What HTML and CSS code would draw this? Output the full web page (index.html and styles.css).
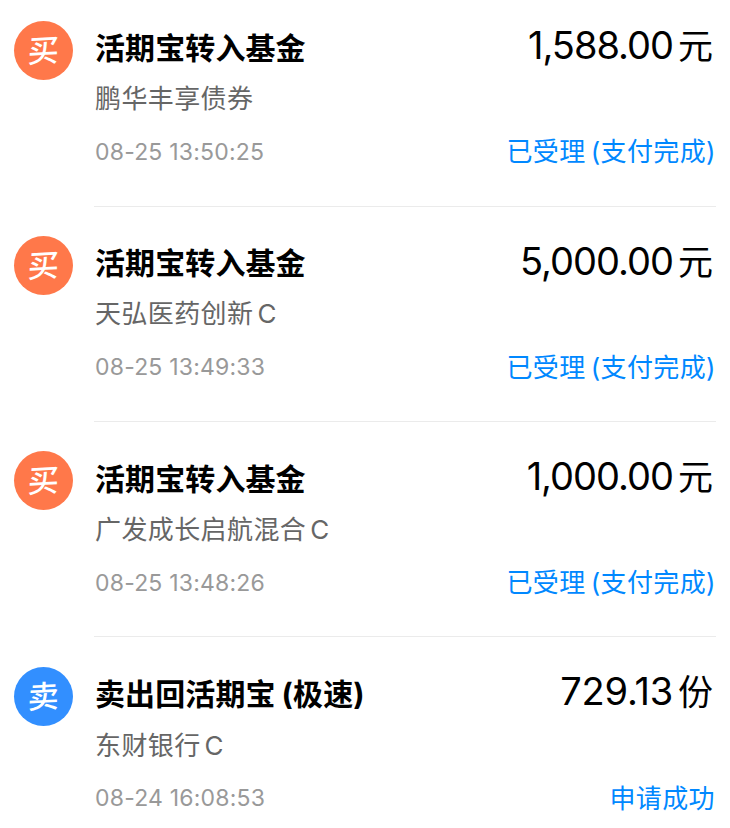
FILE: index.html
```html
<!DOCTYPE html>
<html lang="zh-CN">
<head>
  <meta charset="UTF-8">
  <title>交易记录</title>
  <link rel="stylesheet" href="styles.css">
</head>
<body>
  <div class="record-list">
    <div class="record">
      <div class="badge buy"><span>买</span></div>
      <div class="record-body">
        <div class="record-info">
          <div class="title">活期宝转入基金</div>
          <div class="fund">鹏华丰享债券</div>
          <div class="time">08-25 13:50:25</div>
        </div>
        <div class="record-result">
          <div class="amount">1,588.00<span class="unit">元</span></div>
          <div class="status">已受理<span class="paren">(</span>支付完成)</div>
        </div>
      </div>
    </div>

    <div class="record">
      <div class="badge buy"><span>买</span></div>
      <div class="record-body">
        <div class="record-info">
          <div class="title">活期宝转入基金</div>
          <div class="fund">天弘医药创新<span class="share">C</span></div>
          <div class="time">08-25 13:49:33</div>
        </div>
        <div class="record-result">
          <div class="amount">5,000.00<span class="unit">元</span></div>
          <div class="status">已受理<span class="paren">(</span>支付完成)</div>
        </div>
      </div>
    </div>

    <div class="record">
      <div class="badge buy"><span>买</span></div>
      <div class="record-body">
        <div class="record-info">
          <div class="title">活期宝转入基金</div>
          <div class="fund">广发成长启航混合<span class="share">C</span></div>
          <div class="time">08-25 13:48:26</div>
        </div>
        <div class="record-result">
          <div class="amount">1,000.00<span class="unit">元</span></div>
          <div class="status">已受理<span class="paren">(</span>支付完成)</div>
        </div>
      </div>
    </div>

    <div class="record">
      <div class="badge sell"><span>卖</span></div>
      <div class="record-body">
        <div class="record-info">
          <div class="title">卖出回活期宝<span class="paren">(</span>极速)</div>
          <div class="fund">东财银行<span class="share">C</span></div>
          <div class="time">08-24 16:08:53</div>
        </div>
        <div class="record-result">
          <div class="amount shares">729.13<span class="unit">份</span></div>
          <div class="status">申请成功</div>
        </div>
      </div>
    </div>
  </div>
</body>
</html>
```
FILE: styles.css
```css
* {
  box-sizing: border-box;
}

body {
  margin: 0;
  background: #fff;
  font-family: Inter, "Noto Sans CJK SC", sans-serif;
  overflow: hidden;
}

.record-list {
  padding: 0 14px;
}

.record {
  display: flex;
  height: 215.3px;
}

.badge {
  display: flex;
  align-items: center;
  justify-content: center;
  flex: none;
  width: 59px;
  height: 59px;
  margin: 20.8px 21px 0 0;
  padding-bottom: 4px;
  border-radius: 50%;
  color: #fff;
  font-family: "Noto Sans CJK SC", sans-serif;
  font-size: 31px;
  font-weight: 500;
  line-height: 55px;
}

.badge span {
  transform: rotate(-3deg) skewX(-5deg);
}

.buy {
  background: #ff784a;
}

.sell {
  background: #328fff;
}

.record-body {
  display: flex;
  justify-content: space-between;
  flex: 1;
  height: 206.8px;
  border-bottom: 1px solid #ebebeb;
  white-space: nowrap;
}

.record:last-child .record-body {
  border-bottom: none;
}

.record-info {
  padding: 28px 0 0 1px;
}

.title {
  color: #000;
  font-size: 30px;
  font-weight: 700;
  letter-spacing: 0.1px;
  line-height: 40px;
}

.title .paren {
  margin-left: 6px;
}

.fund {
  margin-top: 13px;
  color: #666;
  font-size: 26px;
  letter-spacing: 0.4px;
  line-height: 36px;
}

.record:last-child .fund {
  padding-top: 1px;
}

.share {
  margin-left: 4px;
}

.time {
  margin-top: 19px;
  color: #999;
  font-size: 23px;
  letter-spacing: 0.2px;
  line-height: 32px;
}

.record:last-child .time {
  margin-top: 18px;
}

.record-result {
  padding: 19.3px 0 0;
  text-align: right;
}

.amount {
  padding-right: 4px;
  color: #000;
  font-size: 38px;
  letter-spacing: -1px;
  line-height: 52px;
}

.shares {
  letter-spacing: -0.2px;
}

.unit {
  margin-left: 5px;
  font-size: 35px;
  letter-spacing: -1px;
}

.status {
  margin-top: 62px;
  color: #0088ff;
  font-size: 26px;
  letter-spacing: 0.4px;
  line-height: 36px;
}

.record:last-child .status {
  margin-top: 63px;
  padding-right: 1px;
}

.paren {
  margin-left: 5px;
}
```
